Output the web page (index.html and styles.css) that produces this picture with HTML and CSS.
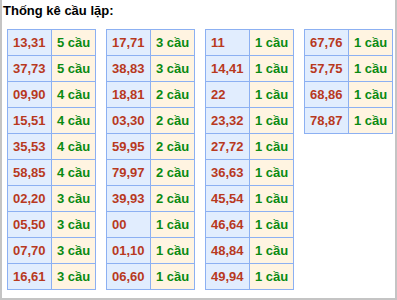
FILE: index.html
```html
<!DOCTYPE html>
<html>
<head>
<meta charset="utf-8">
<link rel="stylesheet" href="styles.css">
</head>
<body>
<div class="box">
  <div class="title">Thống kê cầu lặp:</div>
  <div class="tables">
    <table class="tk">
      <tr><td class="n">13,31</td><td class="c">5 cầu</td></tr>
      <tr><td class="n">37,73</td><td class="c">5 cầu</td></tr>
      <tr><td class="n">09,90</td><td class="c">4 cầu</td></tr>
      <tr><td class="n">15,51</td><td class="c">4 cầu</td></tr>
      <tr><td class="n">35,53</td><td class="c">4 cầu</td></tr>
      <tr><td class="n">58,85</td><td class="c">4 cầu</td></tr>
      <tr><td class="n">02,20</td><td class="c">3 cầu</td></tr>
      <tr><td class="n">05,50</td><td class="c">3 cầu</td></tr>
      <tr><td class="n">07,70</td><td class="c">3 cầu</td></tr>
      <tr><td class="n">16,61</td><td class="c">3 cầu</td></tr>
    </table>
    <table class="tk">
      <tr><td class="n">17,71</td><td class="c">3 cầu</td></tr>
      <tr><td class="n">38,83</td><td class="c">3 cầu</td></tr>
      <tr><td class="n">18,81</td><td class="c">2 cầu</td></tr>
      <tr><td class="n">03,30</td><td class="c">2 cầu</td></tr>
      <tr><td class="n">59,95</td><td class="c">2 cầu</td></tr>
      <tr><td class="n">79,97</td><td class="c">2 cầu</td></tr>
      <tr><td class="n">39,93</td><td class="c">2 cầu</td></tr>
      <tr><td class="n">00</td><td class="c">1 cầu</td></tr>
      <tr><td class="n">01,10</td><td class="c">1 cầu</td></tr>
      <tr><td class="n">06,60</td><td class="c">1 cầu</td></tr>
    </table>
    <table class="tk">
      <tr><td class="n">11</td><td class="c">1 cầu</td></tr>
      <tr><td class="n">14,41</td><td class="c">1 cầu</td></tr>
      <tr><td class="n">22</td><td class="c">1 cầu</td></tr>
      <tr><td class="n">23,32</td><td class="c">1 cầu</td></tr>
      <tr><td class="n">27,72</td><td class="c">1 cầu</td></tr>
      <tr><td class="n">36,63</td><td class="c">1 cầu</td></tr>
      <tr><td class="n">45,54</td><td class="c">1 cầu</td></tr>
      <tr><td class="n">46,64</td><td class="c">1 cầu</td></tr>
      <tr><td class="n">48,84</td><td class="c">1 cầu</td></tr>
      <tr><td class="n">49,94</td><td class="c">1 cầu</td></tr>
    </table>
    <table class="tk">
      <tr><td class="n">67,76</td><td class="c">1 cầu</td></tr>
      <tr><td class="n">57,75</td><td class="c">1 cầu</td></tr>
      <tr><td class="n">68,86</td><td class="c">1 cầu</td></tr>
      <tr><td class="n">78,87</td><td class="c">1 cầu</td></tr>
    </table>
  </div>
</div>
</body>
</html>
```
FILE: styles.css
```css
html, body {
  margin: 0;
  padding: 0;
  background: #fff;
}
.box {
  box-sizing: border-box;
  width: 397px;
  height: 300px;
  border: 2px solid #c4c4c4;
  border-top: none;
  padding: 3px 0 0 1px;
  font-family: "Liberation Sans", Arial, sans-serif;
}
.title {
  font-size: 13px;
  font-weight: bold;
  line-height: 15px;
  color: #000;
}
.tables {
  display: flex;
  align-items: flex-start;
  gap: 10px;
  padding: 11px 0 0 4px;
}
.tk {
  border-collapse: collapse;
  table-layout: fixed;
  width: 89px;
}
.tk td {
  width: 50%;
  height: 25px;
  padding: 0 0 0 5px;
  border: 1px solid #8cb0f2;
  font-size: 13px;
  font-weight: bold;
  white-space: nowrap;
  text-align: left;
  vertical-align: middle;
}
.tk .n {
  background: #e1edfe;
  color: #b8391e;
}
.tk .c {
  background: #fff4e1;
  color: #0a8a12;
}
```
